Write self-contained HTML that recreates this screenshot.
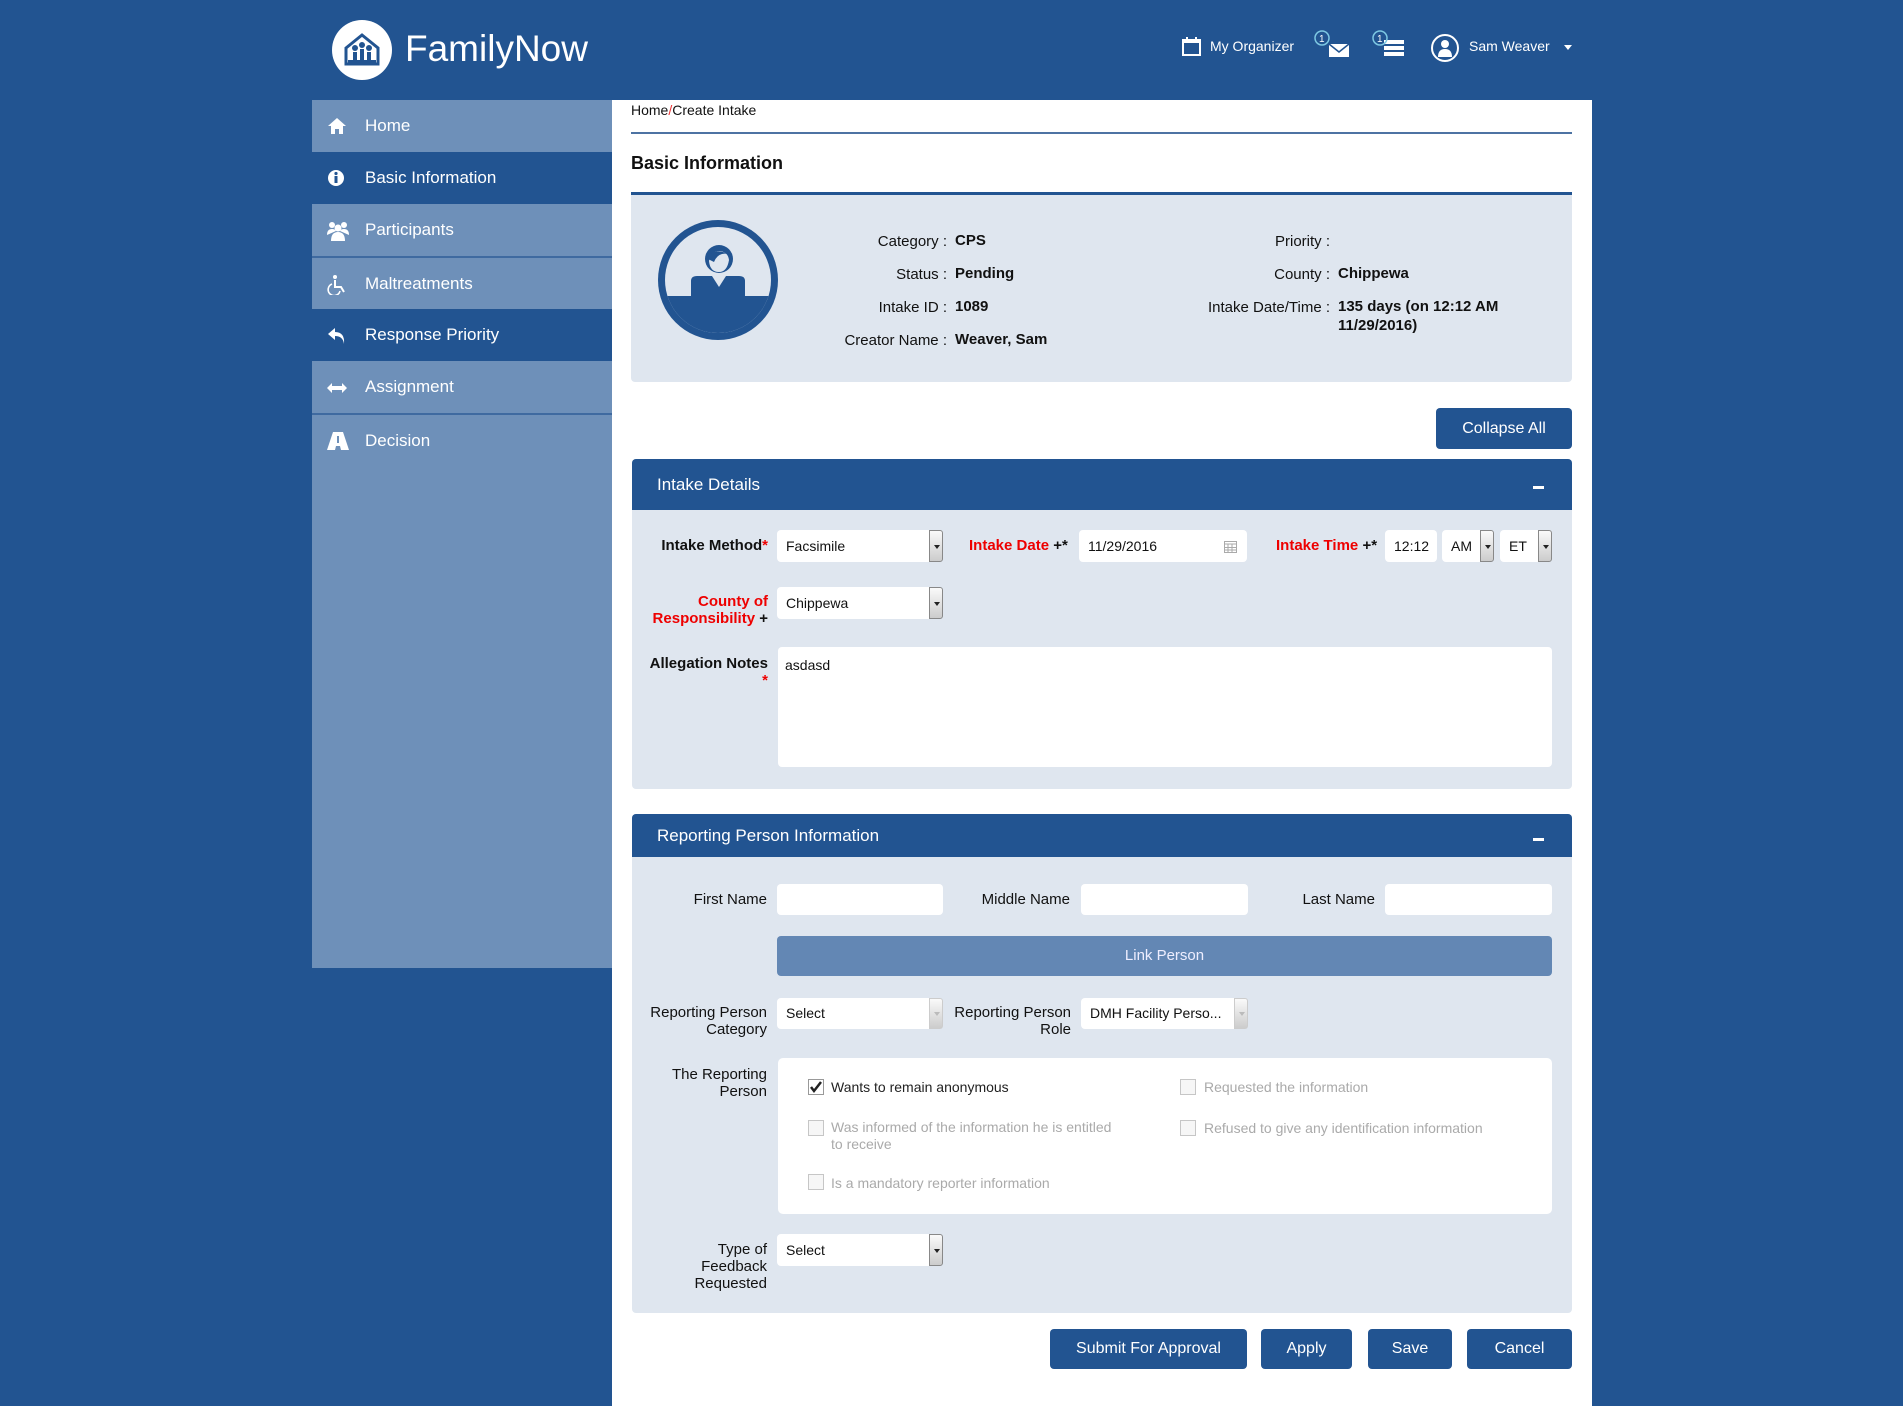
<!DOCTYPE html>
<html><head><meta charset="utf-8"><style>
*{box-sizing:border-box;margin:0;padding:0}
body{width:1903px;height:1406px;background:#225491;font-family:"Liberation Sans",sans-serif;position:relative;overflow:hidden;color:#111}
.a{position:absolute}
.side{left:312px;top:100px;width:300px;height:868px;background:#6e90b9}
.item{position:absolute;left:0;width:300px;height:52px;color:#fff;font-size:17px;line-height:52px;padding-left:53px}
.item.d{background:#225491}
.item svg{position:absolute;left:15px;top:17px}
.sep{position:absolute;left:0;width:300px;height:2px;background:#3f6aa0}
.main{left:612px;top:100px;width:980px;height:1306px;background:#fff}
.lbl{position:absolute;font-size:15px;text-align:right;line-height:17px}
.val{position:absolute;font-size:15px;font-weight:bold;line-height:19px}
.panel{position:absolute;left:632px;width:940px;background:#dfe6ef;border-radius:4px}
.ph{position:absolute;left:0;top:0;width:100%;background:#225491;color:#fff;font-size:17px;border-radius:4px 4px 0 0;padding-left:25px}
.inp{position:absolute;background:#fff;border-radius:4px;font-size:14px;padding-left:9px}
.dd{position:absolute;right:0;top:0;width:14px;height:100%;background:linear-gradient(#fafafa,#ccc);border:1px solid #888;border-radius:0 3px 3px 0}
.dd:after{content:"";position:absolute;left:4px;top:45%;border:3px solid transparent;border-top:4px solid #222}
.dd.g{border-color:#ccc}.dd.g:after{border-top-color:#bbb}
.btn{position:absolute;background:#225491;color:#fff;font-size:16px;text-align:center;border-radius:4px}
.cb{position:absolute;width:16px;height:16px;border:1px solid #c6c6c6;background:#f6f6f6}
.ct{position:absolute;font-size:14px;color:#aaa;line-height:17px}
.minus{position:absolute;right:28px;width:11px;height:3px;background:#fff}
</style></head><body>
<div class="a" style="left:332px;top:20px;width:60px;height:60px;border-radius:50%;background:#fff"></div>
<svg class="a" style="left:340px;top:28px" width="44" height="44" viewBox="0 0 44 44"><path d="M6 20 L22 7 L38 20 L38 36 L6 36 Z" fill="none" stroke="#225491" stroke-width="3"/><circle cx="15" cy="20" r="3" fill="#225491"/><circle cx="22" cy="17" r="3" fill="#225491"/><circle cx="29" cy="20" r="3" fill="#225491"/><path d="M13 24h4v8h-4zM20 21h4v11h-4zM27 24h4v8h-4z" fill="#225491"/><rect x="8" y="32" width="28" height="5" fill="#225491"/></svg>
<div class="a" style="left:405px;top:27px;color:#fff;font-size:37px;line-height:44px">FamilyNow</div>
<svg class="a" style="left:1182px;top:36px" width="19" height="20" viewBox="0 0 19 20"><rect x="1" y="4" width="17" height="15" fill="none" stroke="#fff" stroke-width="2"/><rect x="1" y="4" width="17" height="3" fill="#fff"/><rect x="4" y="1" width="2" height="5" fill="#fff"/><rect x="13" y="1" width="2" height="5" fill="#fff"/></svg>
<div class="a" style="left:1210px;top:38px;color:#fff;font-size:14px">My Organizer</div>
<svg class="a" style="left:1314px;top:30px" width="36" height="28" viewBox="0 0 36 28"><path d="M15 14 h20 v13 h-20z" fill="#fff"/><path d="M15 14 l10 8 l10 -8" fill="none" stroke="#225491" stroke-width="1.5"/><circle cx="8" cy="8" r="7" fill="none" stroke="#7ec8e3" stroke-width="1.5"/><text x="5" y="12" fill="#fff" font-size="10" font-family="Liberation Sans">1</text></svg>
<svg class="a" style="left:1372px;top:30px" width="36" height="28" viewBox="0 0 36 28"><rect x="12" y="10" width="20" height="4" fill="#fff"/><rect x="12" y="16" width="20" height="4" fill="#fff"/><rect x="12" y="22" width="20" height="4" fill="#fff"/><circle cx="8" cy="8" r="7" fill="none" stroke="#7ec8e3" stroke-width="1.5"/><text x="5" y="12" fill="#fff" font-size="10" font-family="Liberation Sans">1</text></svg>
<svg class="a" style="left:1430px;top:33px" width="30" height="30" viewBox="0 0 30 30"><circle cx="15" cy="15" r="13" fill="none" stroke="#fff" stroke-width="2"/><circle cx="15" cy="11" r="4" fill="#fff"/><path d="M8 24 q0-8 7-8 q7 0 7 8z" fill="#fff"/></svg>
<div class="a" style="left:1469px;top:38px;color:#fff;font-size:14px">Sam Weaver</div>
<div class="a" style="left:1564px;top:45px;border:4px solid transparent;border-top:5px solid #fff"></div>

<div class="a side">
<div class="item" style="top:0">Home<svg width="20" height="18" viewBox="0 0 20 18"><path d="M10 1 L1 9 h3 v8 h4 v-5 h4 v5 h4 v-8 h3z" fill="#fff"/></svg></div>
<div class="item d" style="top:52px">Basic Information<svg width="18" height="18" viewBox="0 0 18 18"><circle cx="9" cy="9" r="8" fill="#fff"/><rect x="7.5" y="7" width="3" height="7" fill="#225491"/><circle cx="9" cy="4.5" r="1.6" fill="#225491"/></svg></div>
<div class="item" style="top:104px">Participants<svg width="22" height="20" viewBox="0 0 22 20"><circle cx="5" cy="4" r="3" fill="#fff"/><circle cx="17" cy="4" r="3" fill="#fff"/><circle cx="11" cy="7" r="3.5" fill="#fff"/><path d="M0 14 q0-6 5-6 q3 0 4 2 M13 10 q1-2 4-2 q5 0 5 6z" fill="#fff"/><path d="M4 20 q0-9 7-9 q7 0 7 9z" fill="#fff"/></svg></div>
<div class="sep" style="top:156px"></div>
<div class="item" style="top:158px">Maltreatments<svg width="20" height="20" viewBox="0 0 20 20"><circle cx="8" cy="2" r="2" fill="#fff"/><path d="M8 5 v7 h6 l3 5" fill="none" stroke="#fff" stroke-width="2"/><path d="M5 9 a6 6 0 1 0 8 7" fill="none" stroke="#fff" stroke-width="1.6"/></svg></div>
<div class="item d" style="top:209px">Response Priority<svg width="20" height="20" viewBox="0 0 20 20"><path d="M8 2 L1 8 L8 14 v-4 q8 0 9 8 q1-12 -9-12z" fill="#fff"/></svg></div>
<div class="item" style="top:261px">Assignment<svg width="20" height="12" viewBox="0 0 20 12" style="top:21px"><path d="M0 6 l5-5 v3 h10 v-3 l5 5 l-5 5 v-3 h-10 v3z" fill="#fff"/></svg></div>
<div class="sep" style="top:313px"></div>
<div class="item" style="top:315px">Decision<svg width="22" height="18" viewBox="0 0 22 18"><path d="M6 0 h10 l6 18 h-8 l-1-4 h-4 l-1 4 h-8z" fill="#fff"/><rect x="10" y="4" width="2" height="7" fill="#6e90b9"/></svg></div>
</div>

<div class="a main"></div>
<div class="a" style="left:631px;top:102px;font-size:14px">Home<span style="color:#e33">/</span>Create Intake</div>
<div class="a" style="left:631px;top:132px;width:941px;height:2px;background:#4d73a3"></div>
<div class="a" style="left:631px;top:153px;font-size:18px;font-weight:bold">Basic Information</div>
<div class="a" style="left:631px;top:192px;width:941px;height:3px;background:#225491"></div>
<div class="a" style="left:631px;top:195px;width:941px;height:187px;background:#dfe6ef;border-radius:0 0 4px 4px"></div>
<svg class="a" style="left:657px;top:219px" width="122" height="122" viewBox="0 0 122 122"><defs><clipPath id="c"><circle cx="61" cy="61" r="53"/></clipPath></defs><circle cx="61" cy="61" r="60" fill="#225491"/><circle cx="61" cy="61" r="53" fill="#dfe6ef"/><g clip-path="url(#c)"><rect x="0" y="77" width="122" height="60" fill="#225491"/><path d="M34 80 v-18 q0-5 6-5 h42 q6 0 6 5 v18z" fill="#225491"/></g><circle cx="62" cy="40" r="14" fill="#225491"/><path d="M52 42 q2-10 11-10 q8 1 9 9 q-2 12 -10 12 q-9 0 -10-11z" fill="#dfe6ef"/><path d="M51 40 q5-12 20-5 q-10-2 -14 8z" fill="#225491"/><path d="M55 57 l7 11 l7-11z" fill="#dfe6ef"/></svg>
<div class="lbl" style="right:956px;top:233px">Category :</div><div class="val" style="left:955px;top:231px">CPS</div>
<div class="lbl" style="right:956px;top:266px">Status :</div><div class="val" style="left:955px;top:264px">Pending</div>
<div class="lbl" style="right:956px;top:299px">Intake ID :</div><div class="val" style="left:955px;top:297px">1089</div>
<div class="lbl" style="right:956px;top:332px">Creator Name :</div><div class="val" style="left:955px;top:330px">Weaver, Sam</div>
<div class="lbl" style="right:573px;top:233px">Priority :</div>
<div class="lbl" style="right:573px;top:266px">County :</div><div class="val" style="left:1338px;top:264px">Chippewa</div>
<div class="lbl" style="right:573px;top:299px">Intake Date/Time :</div><div class="val" style="left:1338px;top:297px">135 days (on 12:12 AM<br>11/29/2016)</div>

<div class="btn" style="left:1436px;top:408px;width:136px;height:41px;line-height:41px">Collapse All</div>

<div class="panel" style="top:459px;height:330px">
<div class="ph" style="height:51px;line-height:51px">Intake Details<div class="minus" style="top:27px"></div></div>
</div>
<div class="lbl" style="right:1135px;top:537px;font-weight:bold">Intake Method<span style="color:#e00">*</span></div>
<div class="inp" style="left:777px;top:530px;width:166px;height:32px;line-height:32px">Facsimile<div class="dd"></div></div>
<div class="lbl" style="left:969px;top:537px;font-weight:bold;color:#e00;text-align:left">Intake Date <span style="color:#111">+*</span></div>
<div class="inp" style="left:1079px;top:530px;width:168px;height:32px;line-height:32px">11/29/2016<svg style="position:absolute;right:10px;top:9px" width="13" height="14" viewBox="0 0 13 14"><rect x="0.5" y="2.5" width="12" height="11" fill="none" stroke="#aaa"/><path d="M0 5h13M4 5v9M8 5v9M0 8.5h13M0 11h13" stroke="#aaa"/></svg></div>
<div class="lbl" style="left:1276px;top:537px;font-weight:bold;color:#e00;text-align:left">Intake Time <span style="color:#111">+*</span></div>
<div class="inp" style="left:1385px;top:530px;width:52px;height:32px;line-height:32px">12:12</div>
<div class="inp" style="left:1442px;top:530px;width:52px;height:32px;line-height:32px">AM<div class="dd"></div></div>
<div class="inp" style="left:1500px;top:530px;width:52px;height:32px;line-height:32px">ET<div class="dd"></div></div>
<div class="lbl" style="right:1135px;top:593px;color:#e00;font-weight:bold">County of<br>Responsibility <span style="color:#111">+</span></div>
<div class="inp" style="left:777px;top:587px;width:166px;height:32px;line-height:32px">Chippewa<div class="dd"></div></div>
<div class="lbl" style="right:1135px;top:655px;font-weight:bold">Allegation Notes<br><span style="color:#e00">*</span></div>
<div class="inp" style="left:778px;top:647px;width:774px;height:120px;padding:10px 7px">asdasd</div>

<div class="panel" style="top:814px;height:499px">
<div class="ph" style="height:43px;line-height:43px">Reporting Person Information<div class="minus" style="top:24px"></div></div>
</div>
<div class="lbl" style="right:1136px;top:891px">First Name</div>
<div class="inp" style="left:777px;top:884px;width:166px;height:31px"></div>
<div class="lbl" style="right:833px;top:891px">Middle Name</div>
<div class="inp" style="left:1081px;top:884px;width:167px;height:31px"></div>
<div class="lbl" style="right:528px;top:891px">Last Name</div>
<div class="inp" style="left:1385px;top:884px;width:167px;height:31px"></div>
<div class="a" style="left:777px;top:936px;width:775px;height:40px;background:#6387b4;border-radius:4px;color:#eef;font-size:15px;text-align:center;line-height:40px">Link Person</div>
<div class="lbl" style="right:1136px;top:1004px">Reporting Person<br>Category</div>
<div class="inp" style="left:777px;top:998px;width:166px;height:31px;line-height:31px">Select<div class="dd g"></div></div>
<div class="lbl" style="right:832px;top:1004px">Reporting Person<br>Role</div>
<div class="inp" style="left:1081px;top:998px;width:167px;height:31px;line-height:31px">DMH Facility Perso...<div class="dd g"></div></div>
<div class="lbl" style="right:1136px;top:1066px">The Reporting<br>Person</div>
<div class="a" style="left:778px;top:1058px;width:774px;height:156px;background:#fff;border-radius:5px"></div>
<div class="cb" style="left:808px;top:1079px;border-color:#999;background:#fff"><svg width="14" height="14" viewBox="0 0 14 14"><path d="M2 7 l3 4 l7-9" fill="none" stroke="#222" stroke-width="2.5"/></svg></div>
<div class="ct" style="left:831px;top:1079px;color:#222">Wants to remain anonymous</div>
<div class="cb" style="left:1180px;top:1079px"></div>
<div class="ct" style="left:1204px;top:1079px">Requested the information</div>
<div class="cb" style="left:808px;top:1120px"></div>
<div class="ct" style="left:831px;top:1119px">Was informed of the information he is entitled<br>to receive</div>
<div class="cb" style="left:1180px;top:1120px"></div>
<div class="ct" style="left:1204px;top:1120px">Refused to give any identification information</div>
<div class="cb" style="left:808px;top:1174px"></div>
<div class="ct" style="left:831px;top:1175px">Is a mandatory reporter information</div>
<div class="lbl" style="right:1136px;top:1241px">Type of<br>Feedback<br>Requested</div>
<div class="inp" style="left:777px;top:1234px;width:166px;height:32px;line-height:32px">Select<div class="dd"></div></div>

<div class="btn" style="left:1050px;top:1329px;width:197px;height:40px;line-height:40px">Submit For Approval</div>
<div class="btn" style="left:1261px;top:1329px;width:91px;height:40px;line-height:40px">Apply</div>
<div class="btn" style="left:1368px;top:1329px;width:84px;height:40px;line-height:40px">Save</div>
<div class="btn" style="left:1467px;top:1329px;width:105px;height:40px;line-height:40px">Cancel</div>
</body></html>
